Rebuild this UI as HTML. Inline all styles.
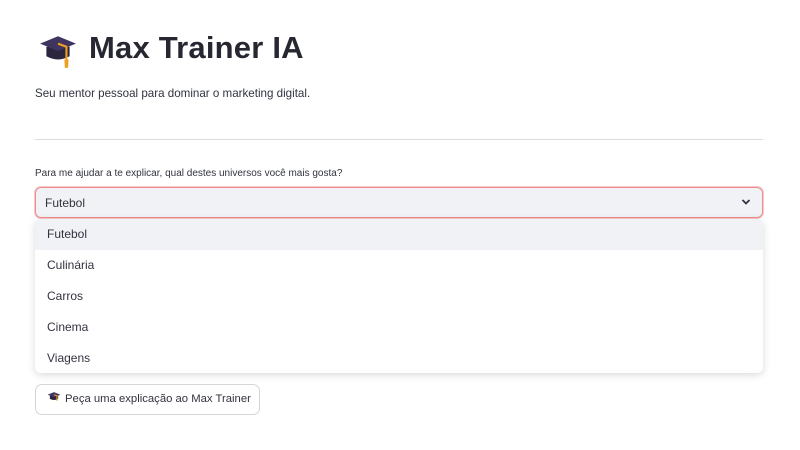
<!DOCTYPE html>
<html><head><meta charset="utf-8"><style>
body{margin:0;width:800px;height:450px;background:#fff;font-family:"Liberation Sans",sans-serif;color:#31333f;position:relative;overflow:hidden}
.abs{position:absolute}
h1{position:absolute;left:89px;top:30px;margin:0;font-size:31px;font-weight:bold;letter-spacing:0.2px;color:#262730;white-space:nowrap}
.sub{left:35px;top:87px;font-size:11.6px;white-space:nowrap}
.hr{left:35px;top:139px;width:728px;height:1px;background:#dcdcdc}
.lbl{left:35px;top:168px;font-size:10px;white-space:nowrap}
.sel{left:35px;top:187px;width:726px;height:29px;border:1px solid #f08c8c;border-radius:6px;background:#f0f2f6;box-shadow:0 0 0 1px #f8c9c9}
.sel span{position:absolute;left:9px;top:8px;font-size:12px}
.dd{left:35px;top:219px;width:728px;height:154px;background:#fff;border-radius:6px;box-shadow:0 2px 8px rgba(0,0,0,0.15);overflow:hidden}
.it{height:31px;line-height:31px;padding-left:12px;font-size:12px}
.btn{left:35px;top:384px;width:225px;height:31px;border:1px solid #d6d6d9;border-radius:7px;background:#fff;font-size:11.3px;line-height:29px;box-sizing:border-box;padding-left:11px;white-space:nowrap}
</style></head><body>
<svg class="abs" style="left:39px;top:33px" width="38" height="36" viewBox="0 0 36 34">
<path d="M7 13 L7 22 Q18 28 29 22 L29 13 Z" fill="#2b2540"/>
<path d="M1 10 L18 3 L35 10 L18 17 Z" fill="#3f3560"/>
<path d="M18 10 L26 13 L26 25" stroke="#f0a020" stroke-width="2" fill="none"/>
<path d="M24 25 L28 25 L27.5 33 L24.5 33 Z" fill="#f0a020"/>
</svg>
<h1>Max Trainer IA</h1>
<div class="abs sub">Seu mentor pessoal para dominar o marketing digital.</div>
<div class="abs hr"></div>
<div class="abs lbl">Para me ajudar a te explicar, qual destes universos você mais gosta?</div>
<div class="abs sel"><span>Futebol</span>
<svg style="position:absolute;right:11px;top:10px" width="10" height="8" viewBox="0 0 10 8"><path d="M1.5 2 L5 5.5 L8.5 2" stroke="#31333f" stroke-width="1.8" fill="none"/></svg></div>
<div class="abs dd">
<div class="it" style="background:#f0f2f6">Futebol</div>
<div class="it">Culinária</div>
<div class="it">Carros</div>
<div class="it">Cinema</div>
<div class="it">Viagens</div>
</div>
<div class="abs btn"><svg width="14" height="12" viewBox="0 0 36 32" style="vertical-align:-1px;margin-right:4px"><path d="M7 13 L7 21 Q18 27 29 21 L29 13 Z" fill="#2b2540"/><path d="M1 10 L18 3 L35 10 L18 17 Z" fill="#3f3560"/><path d="M18 10 L26 13 L26 26" stroke="#f0a020" stroke-width="3" fill="none"/></svg>Peça uma explicação ao Max Trainer</div>
</body></html>
